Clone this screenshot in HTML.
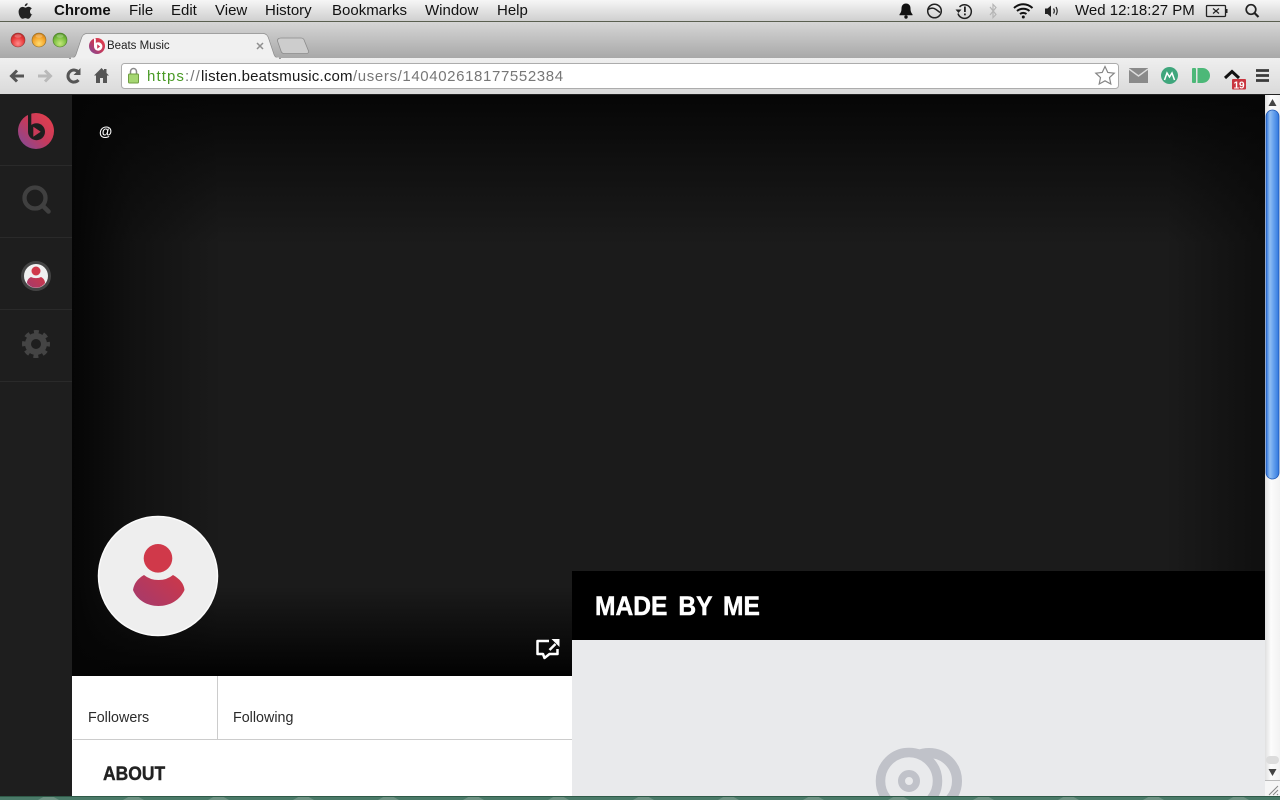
<!DOCTYPE html>
<html><head><meta charset="utf-8"><title>Beats Music</title>
<style>
html,body{margin:0;padding:0;width:1280px;height:800px;overflow:hidden;background:#4a7a68;font-family:"Liberation Sans",sans-serif}
.a{position:absolute;white-space:nowrap}
.m{top:3px;font-size:15px;line-height:16px;color:#111}
svg{position:absolute;left:0;top:0}
</style></head><body>
<div class="a" style="left:0;top:0;width:1280px;height:21px;background:linear-gradient(#f6f6f6,#cfcfcf)"></div>
<div class="a" style="left:0;top:21px;width:1280px;height:1px;background:#5a5f50"></div>
<div class="a" style="left:0;top:22px;width:1280px;height:36px;background:linear-gradient(#d6d6d6,#a8a8a8)"></div>
<div class="a" style="left:0;top:58px;width:1280px;height:36px;background:linear-gradient(#efefef,#dadada)"></div>
<div class="a" style="left:0;top:94px;width:1280px;height:1px;background:#222"></div>

<span class="a m" style="left:54px;font-weight:bold">Chrome</span>
<span class="a m" style="left:129px">File</span>
<span class="a m" style="left:171px">Edit</span>
<span class="a m" style="left:215px">View</span>
<span class="a m" style="left:265px">History</span>
<span class="a m" style="left:332px">Bookmarks</span>
<span class="a m" style="left:425px">Window</span>
<span class="a m" style="left:497px">Help</span>
<span class="a m" style="left:1075px">Wed 12:18:27 PM</span>

<div class="a" style="left:0;top:95px;width:72px;height:701px;background:#1e1e1e"></div>
<div class="a" style="left:72px;top:95px;width:1193px;height:581px;background:linear-gradient(90deg,#050505 0,rgba(5,5,5,.45) 60px,rgba(5,5,5,0) 150px),linear-gradient(270deg,rgba(5,5,5,.55) 0,rgba(5,5,5,0) 100px),linear-gradient(#060606 0,rgba(6,6,6,.5) 70px,rgba(6,6,6,0) 150px),linear-gradient(0deg,#020202 0,rgba(2,2,2,.55) 40px,rgba(2,2,2,0) 90px),#1b1b1b"></div>
<div class="a" style="left:72px;top:676px;width:500px;height:120px;background:#fff"></div>
<div class="a" style="left:572px;top:571px;width:693px;height:69px;background:#000"></div>
<div class="a" style="left:572px;top:640px;width:693px;height:156px;background:#e9eaec"></div>
<div class="a" style="left:217px;top:676px;width:1px;height:64px;background:#ccc"></div>
<div class="a" style="left:73px;top:739px;width:499px;height:1px;background:#ccc"></div>
<div class="a" style="left:0;top:165px;width:72px;height:1px;background:#2a2a2a"></div>
<div class="a" style="left:0;top:237px;width:72px;height:1px;background:#2a2a2a"></div>
<div class="a" style="left:0;top:309px;width:72px;height:1px;background:#2a2a2a"></div>
<div class="a" style="left:0;top:381px;width:72px;height:1px;background:#2a2a2a"></div>

<span class="a" style="left:99px;top:124px;font-size:13.5px;line-height:16px;color:#fff;font-weight:bold">@</span>
<span class="a" style="left:88px;top:710px;font-size:14.3px;line-height:16px;color:#2b2b2b">Followers</span>
<span class="a" style="left:233px;top:710px;font-size:14.3px;line-height:16px;color:#2b2b2b">Following</span>
<span class="a" style="left:103px;top:764px;font-size:19px;line-height:22px;font-weight:bold;color:#222;-webkit-text-stroke:.4px #222;transform:scaleX(.92);transform-origin:0 0">ABOUT</span>
<span class="a" style="left:595px;top:591px;font-size:27px;line-height:31px;font-weight:bold;color:#fff;-webkit-text-stroke:.5px #fff;word-spacing:4.6px;transform:scaleX(.91);transform-origin:0 0">MADE BY ME</span>

<svg width="1280" height="800" viewBox="0 0 1280 800">
<defs>
<linearGradient id="g" x1="0" y1="1" x2="1" y2="0"><stop offset="0" stop-color="#7b4b9e"/><stop offset=".5" stop-color="#c53a5c"/><stop offset="1" stop-color="#e8404a"/></linearGradient>
<linearGradient id="b" x1="0" y1="1" x2="1" y2=".3"><stop offset="0" stop-color="#a33a6e"/><stop offset="1" stop-color="#c9384c"/></linearGradient>
<radialGradient id="r" cx=".5" cy=".75" r=".75"><stop offset="0" stop-color="#ff8a8a"/><stop offset=".6" stop-color="#e83a3a"/><stop offset="1" stop-color="#b82525"/></radialGradient>
<radialGradient id="o" cx=".5" cy=".75" r=".75"><stop offset="0" stop-color="#ffdb70"/><stop offset=".6" stop-color="#f5a52a"/><stop offset="1" stop-color="#c97a15"/></radialGradient>
<radialGradient id="v" cx=".5" cy=".75" r=".75"><stop offset="0" stop-color="#c5e87c"/><stop offset=".6" stop-color="#7cc040"/><stop offset="1" stop-color="#4f9024"/></radialGradient>
<linearGradient id="th" x1="0" x2="1" y1="0" y2="0"><stop offset="0" stop-color="#2a6ed8"/><stop offset=".3" stop-color="#8fbdf2"/><stop offset=".55" stop-color="#6aa4ee"/><stop offset="1" stop-color="#2f76de"/></linearGradient>
<linearGradient id="tr" x1="0" x2="1" y1="0" y2="0"><stop offset="0" stop-color="#e0e0e0"/><stop offset=".4" stop-color="#fcfcfc"/><stop offset="1" stop-color="#f2f2f2"/></linearGradient>
<pattern id="tri" x="38" y="796" width="85" height="4" patternUnits="userSpaceOnUse"><path d="M0 4 L7 0 H14 L21 4Z" fill="#6f9384"/></pattern>
</defs>

<!-- apple -->
<path d="M27.6 3.2c.2 1.5-1.300 3-2.800 2.900-.2-1.500 1.300-3 2.800-2.900zM31.500 15c-.8 1.900-2 3.800-3.300 3.800-1.200 0-1.500-.7-2.900-.7s-1.800.7-2.900.7c-1.500 0-3.800-3.500-3.800-6.900 0-3 1.900-5 4-5 1.200 0 2.100.8 2.800.8s1.800-.9 3.200-.9c1.100 0 2.400.6 3.200 1.700-2.700 1.500-2.300 5.300.7 6.500z" fill="#222"/>

<!-- status icons -->
<path d="M906 3.500c-3 0-4.500 2.200-4.500 5 0 3-.8 4.500-2 5.800v1h13v-1c-1.200-1.300-2-2.800-2-5.800 0-2.800-1.500-5-4.500-5z" fill="#111"/><circle cx="906" cy="17" r="1.700" fill="#111"/>
<circle cx="934.500" cy="11" r="6.800" fill="none" stroke="#222" stroke-width="1.500"/><path d="M928 9.500c3-2 6-1.500 8 0l4 3" fill="none" stroke="#222" stroke-width="1.500"/>
<path d="M958 13.500a6.800 6.800 0 1 0 1.500-6.500" fill="none" stroke="#222" stroke-width="1.500"/><path d="M955.500 9.500l3 3.500 3-3.500z" fill="#222"/><rect x="964" y="6.500" width="1.800" height="5.500" fill="#222"/><rect x="964" y="13.500" width="1.800" height="1.800" fill="#222"/>
<path d="M990 7l6 7.500-3 3V4.500l3 3-6 7.500" fill="none" stroke="#b5b5b5" stroke-width="1.200"/>
<path d="M1014 8c5.500-5 13-5 18.500 0M1017 11c3.500-3 9-3 12.500 0M1020 14c1.800-1.500 4.500-1.500 6.500 0" fill="none" stroke="#111" stroke-width="2"/><circle cx="1023.300" cy="17" r="1.500" fill="#111"/>
<path d="M1045 8.500h2.500l3.500-3v11.500l-3.500-3H1045z" fill="#222"/><path d="M1053.500 8.500c1 1.500 1 3.500 0 5M1056 7c1.500 2.500 1.500 5.500 0 8" fill="none" stroke="#222" stroke-width="1.200"/>
<rect x="1206.500" y="5.500" width="19" height="11" rx="1" fill="none" stroke="#222" stroke-width="1.300"/><rect x="1226" y="9" width="1.500" height="4" fill="#222"/><path d="M1213 8.500l6 5M1219 8.500l-6 5" stroke="#222" stroke-width="1.200"/>
<circle cx="1251" cy="9.500" r="4.800" fill="none" stroke="#222" stroke-width="1.700"/><path d="M1254.500 13l4 4" stroke="#222" stroke-width="2.200"/>

<!-- traffic lights -->
<circle cx="18" cy="40" r="7" fill="url(#r)" stroke="#8a3a3a" stroke-width=".6"/><ellipse cx="18" cy="36" rx="3.500" ry="1.800" fill="#fff" opacity=".25"/>
<circle cx="39" cy="40" r="7" fill="url(#o)" stroke="#8a6a2a" stroke-width=".6"/><ellipse cx="39" cy="36" rx="3.500" ry="1.800" fill="#fff" opacity=".25"/>
<circle cx="60" cy="40" r="7" fill="url(#v)" stroke="#4a7a2a" stroke-width=".6"/><ellipse cx="60" cy="36" rx="3.500" ry="1.800" fill="#fff" opacity=".25"/>

<!-- new tab -->
<path d="M281 38h20c2 0 3 1 3.500 3l4 10c.3 1.500-.5 2.500-2 2.500H284c-1.500 0-2.500-1-3-2.500l-3.500-10c-.3-2 1.500-3 3.500-3z" fill="#cdcdcd" stroke="#8c8c8c" stroke-width=".8"/>
<!-- tab -->
<path d="M69 58.500c3 0 6-1 7-4l5-15c1-4 3-6 6-6H263c3 0 5 2 6 6l5 15c1 3 4 4 7 4z" fill="#f0f0f0" stroke="#8c8c8c" stroke-width=".7"/>
<rect x="71" y="57.500" width="208" height="1.500" fill="#efefef"/>
<circle cx="97" cy="46" r="8" fill="url(#g)"/><circle cx="98.200" cy="46.500" r="4.200" fill="#fff"/><rect x="94" y="38.500" width="1.800" height="8" fill="#fff"/><path d="M97.200 44.300l3 2.200-3 2.200z" fill="#c93a58"/>
<path d="M257 43l6 6M263 43l-6 6" stroke="#8f8f8f" stroke-width="1.500"/>

<!-- toolbar nav -->
<path d="M24 76H12M17 70.500L11.500 76l5.500 5.500" fill="none" stroke="#555" stroke-width="3"/>
<path d="M38 76h12M45 70.500l5.500 5.500-5.500 5.500" fill="none" stroke="#b9b9b9" stroke-width="3"/>
<path d="M78.500 80a6 6 0 1 1 .3-7.500" fill="none" stroke="#555" stroke-width="3"/><path d="M80.500 68v7h-7z" fill="#555"/>
<path d="M101.500 68l-7.500 7.500h2v7.500h4v-5h3v5h4v-7.500h2l-2.500-2.500V69h-2.500v1.500z" fill="#555"/>

<!-- url box -->
<rect x="121.500" y="63.500" width="997" height="25" rx="3" fill="#fff" stroke="#acacac"/>
<path d="M130.500 74v-2.500a3 3 0 0 1 6 0V74" fill="none" stroke="#8a8a8a" stroke-width="1.500"/><rect x="128.500" y="74" width="10" height="9" rx="1" fill="#a5d672" stroke="#6f9d40"/>
<path d="M1105 66.500l2.800 6 6.400.7-4.700 4.400 1.300 6.400-5.800-3.200-5.800 3.200 1.300-6.400-4.700-4.400 6.400-.7z" fill="#fff" stroke="#858585" stroke-width="1.200"/>

<!-- extensions -->
<rect x="1129" y="68" width="19" height="15" fill="#8a8a8a"/><path d="M1129 69l9.500 7 9.500-7" fill="none" stroke="#ddd" stroke-width="1.400"/>
<circle cx="1169.500" cy="75.500" r="8.500" fill="#3fa67c"/><path d="M1164.500 80l2.500-7 2.500 4 2.500-4 2.500 7" fill="none" stroke="#fff" stroke-width="1.500"/>
<rect x="1192" y="68" width="4" height="15" rx="1" fill="#4cb878"/><path d="M1197.500 68h5a7.500 7.500 0 0 1 0 15h-5z" fill="#4cb878"/>
<path d="M1225 78l7-6.500 7 6.500" fill="none" stroke="#111" stroke-width="3"/>
<rect x="1232" y="79" width="14" height="10.500" rx="1" fill="#c9353f"/>
<text x="1233.500" y="88.500" font-family="Liberation Sans" font-size="10" font-weight="bold" fill="#fff">19</text>
<path d="M1256 70.500h13M1256 75.500h13M1256 80.500h13" stroke="#3a3a3a" stroke-width="2.800"/>

<!-- sidebar -->
<circle cx="36" cy="131" r="18" fill="url(#g)"/>
<rect x="28" y="113" width="3.300" height="19" fill="#1e1e1e"/>
<circle cx="36.500" cy="131.700" r="8.500" fill="#1e1e1e"/>
<path d="M33.300 126.700l7.400 5-7.400 5z" fill="#c93a58"/>
<circle cx="35" cy="198" r="10.500" fill="none" stroke="#404040" stroke-width="4.300"/><path d="M42.500 205.500l6 6" stroke="#404040" stroke-width="4.500" stroke-linecap="round"/>
<circle cx="36" cy="276" r="15" fill="#444"/><circle cx="36" cy="276" r="12" fill="#f0f0f0"/>
<circle cx="36" cy="271" r="4.500" fill="#d0394a"/><path d="M31 277c3 1.500 7 1.500 10 0 2.500 1.200 4 3.500 4 6-2 3-5.200 4.700-9 4.700s-7-1.700-9-4.700c0-2.500 1.500-4.800 4-6z" fill="url(#b)"/>
<circle cx="36" cy="344" r="8" fill="none" stroke="#444" stroke-width="6"/>
<circle cx="36" cy="344" r="11.500" fill="none" stroke="#444" stroke-width="5" stroke-dasharray="4.700 4.330" stroke-dashoffset="2.350"/>

<!-- avatar -->
<circle cx="158" cy="576" r="59.500" fill="#eeeeee" stroke="#fbfbfb" stroke-width="1.500"/>
<circle cx="158" cy="558.300" r="14.300" fill="#d0394a"/>
<path d="M144 575Q150 580 158.500 580T173 575C180 579 184 584 184.500 590 180 600 170 606 158.500 606S137 600 133 590C134 584 137 579 144 575Z" fill="url(#b)"/>

<!-- share -->
<path d="M549 641H537.500V654H543L544.500 658L549.500 654H557.500V649" fill="none" stroke="#fff" stroke-width="2.500" stroke-linejoin="round"/>
<path d="M549.500 650l6-6" stroke="#fff" stroke-width="2.500"/><path d="M551.500 639h8v8z" fill="#fff"/>

<!-- disc -->
<svg x="860" y="740" width="120" height="56" viewBox="860 740 120 56">
<circle cx="929" cy="781" r="28" fill="none" stroke="#c0c2c9" stroke-width="10"/>
<circle cx="909" cy="781" r="28.500" fill="#e9eaec" stroke="#c0c2c9" stroke-width="9.500"/>
<circle cx="909" cy="781" r="7.500" fill="none" stroke="#c0c2c9" stroke-width="7"/>
</svg>

<!-- scrollbar -->
<rect x="1265" y="95" width="15" height="701" fill="url(#tr)"/>
<path d="M1268.500 106l4-7 4 7z" fill="#444"/>
<rect x="1266" y="110" width="13" height="369" rx="6.500" fill="url(#th)" stroke="#1f58b4" stroke-width=".8"/>
<rect x="1266" y="756" width="13" height="8" rx="4" fill="#dcdcdc"/>
<path d="M1268.500 769l4 7 4-7z" fill="#444"/>
<rect x="1265" y="780" width="15" height="16" fill="#f6f6f6"/><rect x="1265" y="780" width="15" height="1" fill="#bbb"/>
<path d="M1269 795l9-9M1273 795l5-5M1277 795l1-1" stroke="#888"/>

<!-- bottom strip -->
<rect x="0" y="796" width="1280" height="4" fill="#4a7a68"/>
<rect x="0" y="796" width="1280" height="4" fill="url(#tri)"/>
<rect x="0" y="796" width="1280" height="1" fill="#2f5a48"/>
</svg>

<span class="a" style="left:107px;top:39px;font-size:11.5px;line-height:14px;color:#222">Beats Music</span>
<span class="a" style="left:147px;top:68px;font-size:15px;line-height:18px;letter-spacing:1.1px;color:#4a9a26">https<span style="color:#777">://</span></span>
<span class="a" style="left:201px;top:68px;font-size:15px;line-height:18px;letter-spacing:.2px;color:#1a1a1a">listen.beatsmusic.com</span>
<span class="a" style="left:353px;top:68px;font-size:15px;line-height:18px;letter-spacing:.62px;color:#777">/users/140402618177552384</span>
</body></html>
